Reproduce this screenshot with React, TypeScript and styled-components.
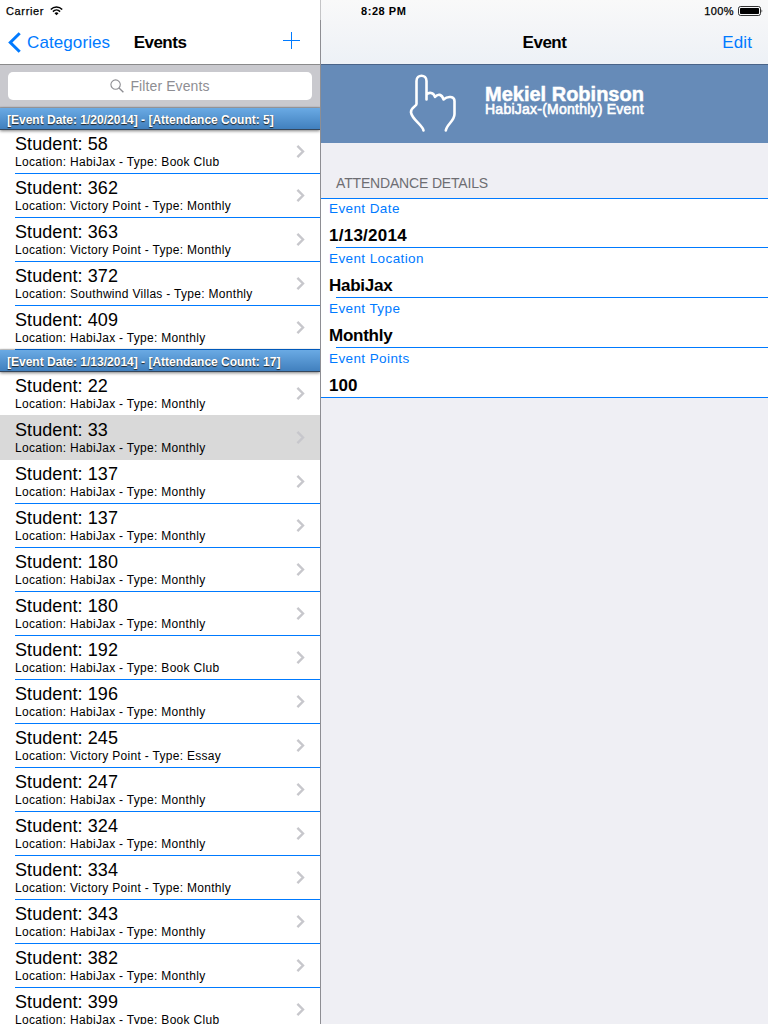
import React from 'react';
import styled, { createGlobalStyle } from 'styled-components';

const BLUE = '#007aff';

const GlobalStyle = createGlobalStyle`
  * { box-sizing: border-box; }
  body {
    margin: 0;
    font-family: "Liberation Sans", Arial, sans-serif;
    color: #000;
    background: #efeff4;
  }
`;

const Screen = styled.div`
  display: flex;
  width: 768px;
  height: 1024px;
  overflow: hidden;
`;

const Master = styled.aside`
  display: flex;
  flex-direction: column;
  width: 320px;
  height: 100%;
  background: #fff;
  overflow: hidden;
`;

const Divider = styled.div`
  width: 1px;
  background: linear-gradient(#c4c4c6 20px, #8e8e93 20px);
`;

const Detail = styled.main`
  display: flex;
  flex-direction: column;
  flex: 1;
  background: #efeff4;
`;

const TopBar = styled.header<{ $tinted?: boolean }>`
  height: 65px;
  flex: none;
  background: ${p => (p.$tinted ? 'linear-gradient(#f9f9f9, #f5f6f8 35%, #edf1f6)' : '#fff')};
  border-bottom: 1px solid ${p => (p.$tinted ? '#4a6488' : '#8a8a8b')};
`;

const StatusBar = styled.div`
  display: flex;
  align-items: center;
  height: 20px;
  padding: 2px 5px 0 6px;
  font-size: 11px;
  line-height: 18px;
  -webkit-text-stroke: 0.25px #000;

  svg { display: block; }
`;

const Carrier = styled.span`
  width: 44px;
  letter-spacing: 0.65px;
`;

const Clock = styled.span`
  font-weight: bold;
  letter-spacing: 0.55px;
  margin-left: 34px;
  -webkit-text-stroke: 0;
`;

const Battery = styled.span`
  display: flex;
  align-items: center;
  gap: 4px;
  margin-left: auto;
  letter-spacing: 0.4px;
`;

const NavRow = styled.div`
  display: grid;
  grid-template-columns: 1fr auto 1fr;
  align-items: center;
  height: 44px;
  padding: 1px 16px 0;
`;

const NavTitle = styled.h1`
  margin: 0;
  font-size: 17px;
  line-height: 20px;
  font-weight: bold;
  letter-spacing: -0.5px;
`;

const NavButton = styled.button<{ $end?: boolean }>`
  display: flex;
  align-items: center;
  gap: 6px;
  justify-self: ${p => (p.$end ? 'end' : 'start')};
  padding: 0;
  border: 0;
  background: none;
  color: ${BLUE};
  font: 17px/20px "Liberation Sans", Arial, sans-serif;
  letter-spacing: 0.1px;
`;

const BackButton = styled(NavButton)`
  margin-left: -8px;

  svg { margin-top: -1px; }
`;

const AddButton = styled(NavButton)`
  margin: 0 4px 4px 0;
`;

const SearchArea = styled.div`
  flex: none;
  height: 43px;
  padding: 7px 8px 8px;
  background: #c9c9ce;
`;

const SearchField = styled.div`
  display: flex;
  align-items: center;
  justify-content: center;
  gap: 6px;
  height: 28px;
  padding-bottom: 1px;
  border-radius: 5px;
  background: #fff;
  color: #8e8e93;
  font-size: 14px;
  letter-spacing: 0.1px;
`;

const SectionHeader = styled.h2`
  position: relative;
  flex: none;
  height: 22px;
  margin: 0;
  padding: 1px 7px 0;
  border-bottom: 1px solid #35475c;
  background: linear-gradient(#6aaae4, #4180be);
  box-shadow: 0 -1px 1px rgba(0, 0, 0, 0.2), 0 1px 3px rgba(0, 0, 0, 0.5);
  color: #fff;
  font-size: 12px;
  line-height: 22px;
  font-weight: bold;
  text-shadow: 0 1px 1px #222;
  white-space: nowrap;
`;

const StudentRow = styled.div<{ $selected?: boolean }>`
  display: flex;
  flex: none;
  align-items: center;
  height: 44px;
  padding-left: 15px;
  background: ${p => (p.$selected ? '#d9d9d9' : '#fff')};
  box-shadow: ${p => (p.$selected ? '0 -1px #d9d9d9' : 'none')};
`;

const RowBody = styled.div<{ $selected?: boolean }>`
  display: flex;
  align-items: center;
  justify-content: space-between;
  flex: 1;
  height: 44px;
  padding-right: 15px;
  border-bottom: 1px solid ${p => (p.$selected ? 'transparent' : BLUE)};
`;

const StudentName = styled.div`
  font-size: 18px;
  line-height: 20px;
  padding-bottom: 1px;
  letter-spacing: 0.08px;
`;

const StudentInfo = styled.div`
  font-size: 12px;
  line-height: 15px;
  letter-spacing: 0.3px;
  white-space: nowrap;
`;

const Banner = styled.section`
  display: flex;
  flex: none;
  height: 78px;
  padding-left: 86px;
  background: #668bb8;
  color: #fff;
`;

const BannerText = styled.div`
  padding: 20px 0 0 26px;
  white-space: nowrap;
`;

const PersonName = styled.div`
  font-size: 20px;
  line-height: 18px;
  font-weight: bold;
  -webkit-text-stroke: 0.5px #fff;
`;

const EventName = styled.div`
  font-size: 14px;
  line-height: 14px;
  margin-top: -1px;
  letter-spacing: 0.24px;
  -webkit-text-stroke: 0.6px #fff;
`;

const GroupTitle = styled.h2`
  flex: none;
  height: 55px;
  margin: 0;
  padding: 32px 15px 0;
  color: #6d6d72;
  font-size: 14px;
  line-height: 17px;
  font-weight: normal;
  letter-spacing: -0.17px;
`;

const Group = styled.section`
  border-top: 1px solid ${BLUE};
  border-bottom: 1px solid ${BLUE};
  background: #fff;
`;

const Field = styled.div`
  height: 50px;
  padding: 2px 8px 0;
  background: linear-gradient(${BLUE}, ${BLUE}) 15px 100% / 100% 1px no-repeat;

  &:first-child { height: 49px; padding-top: 1px; }
  &:last-child { height: 49px; background: none; }
`;

const FieldLabel = styled.div`
  color: ${BLUE};
  font-size: 13.5px;
  line-height: 18px;
  letter-spacing: 0.4px;
`;

const FieldValue = styled.div<{ $spacing: number }>`
  font-size: 17px;
  line-height: 20px;
  padding-top: 8px;
  font-weight: bold;
  letter-spacing: ${p => p.$spacing}px;
`;

const WifiIcon = () => (
  <svg width="13" height="10" viewBox="0 0 13 10" fill="none" stroke="#000" strokeWidth="1.5">
    <path d="M0.8 3.5C4 0.2 9 0.2 12.2 3.5" />
    <path d="M2.9 5.6C5 3.5 8 3.5 10.1 5.6" />
    <path d="M6.5 9.2 4.5 7.2Q6.5 5.4 8.5 7.2Z" fill="#000" stroke="none" />
  </svg>
);

const BatteryIcon = () => (
  <svg width="25" height="10" viewBox="0 0 25 10">
    <rect x="0.5" y="0.5" width="22" height="9" rx="2" fill="none" stroke="#000" strokeWidth="0.8" />
    <rect x="2" y="2" width="19" height="6" rx="0.8" />
    <path d="M23.6 3.2Q25 5 23.6 6.8Z" />
  </svg>
);

const BackIcon = () => (
  <svg width="13" height="21" viewBox="0 0 13 21" fill="none" stroke={BLUE} strokeWidth="3">
    <path d="M11.7 1.2 2.3 10.5l9.4 9.3" />
  </svg>
);

const PlusIcon = () => (
  <svg width="17" height="17" viewBox="0 0 17 17" stroke={BLUE} strokeWidth="1">
    <path d="M8.5 0v17M0 8.5h17" />
  </svg>
);

const SearchIcon = () => (
  <svg width="14" height="14" viewBox="0 0 14 14" fill="none" stroke="#8e8e93" strokeWidth="1.1">
    <circle cx="5.6" cy="5.6" r="4.7" />
    <path d="m9 9 4.4 4.2" strokeWidth="1.4" />
  </svg>
);

const ChevronIcon = () => (
  <svg width="9" height="13" viewBox="0 0 9 13" fill="none" stroke="#c7c7cc" strokeWidth="2.4">
    <path d="m1.4 0.9 5.6 5.6-5.6 5.6" />
  </svg>
);

const HandIcon = () => (
  <svg width="52" height="78" viewBox="0 0 52 78" fill="none" stroke="#fff" strokeWidth="2.6" strokeLinecap="round" strokeLinejoin="round">
    <path d="M16.500 65.500C15.500 60 5 54.500 4 47.500C3.500 42 9.500 41.500 9.500 39V16C9.500 9 19.500 9 19.500 16V34.500M19.500 29.500C22 27 26.500 27 28 32C31 28.500 35 29 36.500 34.500C41 30.500 47.500 31.500 47.500 36V49C47.500 56 40 59 38.800 65.500" />
  </svg>
);

interface Student {
  id: number;
  place: string;
  type: string;
  selected?: boolean;
}

const HABI = 'HabiJax';
const VICTORY = 'Victory Point';

const sections: { date: string; count: number; students: Student[] }[] = [
  {
    date: '1/20/2014',
    count: 5,
    students: [
      { id: 58, place: HABI, type: 'Book Club' },
      { id: 362, place: VICTORY, type: 'Monthly' },
      { id: 363, place: VICTORY, type: 'Monthly' },
      { id: 372, place: 'Southwind Villas', type: 'Monthly' },
      { id: 409, place: HABI, type: 'Monthly' },
    ],
  },
  {
    date: '1/13/2014',
    count: 17,
    students: [
      { id: 22, place: HABI, type: 'Monthly' },
      { id: 33, place: HABI, type: 'Monthly', selected: true },
      { id: 137, place: HABI, type: 'Monthly' },
      { id: 137, place: HABI, type: 'Monthly' },
      { id: 180, place: HABI, type: 'Monthly' },
      { id: 180, place: HABI, type: 'Monthly' },
      { id: 192, place: HABI, type: 'Book Club' },
      { id: 196, place: HABI, type: 'Monthly' },
      { id: 245, place: VICTORY, type: 'Essay' },
      { id: 247, place: HABI, type: 'Monthly' },
      { id: 324, place: HABI, type: 'Monthly' },
      { id: 334, place: VICTORY, type: 'Monthly' },
      { id: 343, place: HABI, type: 'Monthly' },
      { id: 382, place: HABI, type: 'Monthly' },
      { id: 399, place: HABI, type: 'Book Club' },
    ],
  },
];

const fields = [
  { label: 'Event Date', value: '1/13/2014', spacing: 0.25 },
  { label: 'Event Location', value: 'HabiJax', spacing: -0.25 },
  { label: 'Event Type', value: 'Monthly', spacing: -0.25 },
  { label: 'Event Points', value: '100', spacing: 0 },
];

export default function App() {
  return (
    <>
      <GlobalStyle />
      <Screen>
        <Master>
          <TopBar>
            <StatusBar>
              <Carrier>Carrier</Carrier>
              <WifiIcon />
            </StatusBar>
            <NavRow>
              <BackButton><BackIcon />Categories</BackButton>
              <NavTitle>Events</NavTitle>
              <AddButton $end aria-label="Add"><PlusIcon /></AddButton>
            </NavRow>
          </TopBar>
          <SearchArea>
            <SearchField><SearchIcon />Filter Events</SearchField>
          </SearchArea>
          {sections.map(section => (
            <React.Fragment key={section.date}>
              <SectionHeader>
                {`[Event Date: ${section.date}] - [Attendance Count: ${section.count}]`}
              </SectionHeader>
              {section.students.map((s, i) => (
                <StudentRow key={i} $selected={s.selected}>
                  <RowBody $selected={s.selected}>
                    <div>
                      <StudentName>{`Student: ${s.id}`}</StudentName>
                      <StudentInfo>{`Location: ${s.place} - Type: ${s.type}`}</StudentInfo>
                    </div>
                    <ChevronIcon />
                  </RowBody>
                </StudentRow>
              ))}
            </React.Fragment>
          ))}
        </Master>
        <Divider />
        <Detail>
          <TopBar $tinted>
            <StatusBar>
              <Clock>8:28 PM</Clock>
              <Battery>100%<BatteryIcon /></Battery>
            </StatusBar>
            <NavRow>
              <span />
              <NavTitle>Event</NavTitle>
              <NavButton $end>Edit</NavButton>
            </NavRow>
          </TopBar>
          <Banner>
            <HandIcon />
            <BannerText>
              <PersonName>Mekiel Robinson</PersonName>
              <EventName>HabiJax-(Monthly) Event</EventName>
            </BannerText>
          </Banner>
          <GroupTitle>ATTENDANCE DETAILS</GroupTitle>
          <Group>
            {fields.map(({ label, value, spacing }) => (
              <Field key={label}>
                <FieldLabel>{label}</FieldLabel>
                <FieldValue $spacing={spacing}>{value}</FieldValue>
              </Field>
            ))}
          </Group>
        </Detail>
      </Screen>
    </>
  );
}
